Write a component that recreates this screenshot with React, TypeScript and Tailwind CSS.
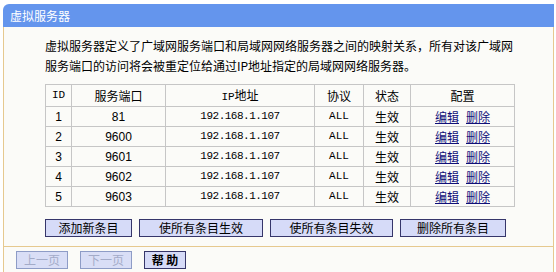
const rows = [
  { id: 1, port: "81" },
  { id: 2, port: "9600" },
  { id: 3, port: "9601" },
  { id: 4, port: "9602" },
  { id: 5, port: "9603" },
];

const cjk = "font-['Noto_Sans_CJK_SC',sans-serif]";
const mono = "font-['Liberation_Mono','Noto_Sans_CJK_SC',monospace]";
const cell = "border border-[#c6c6c6] p-0 text-center align-middle";

function ActionButton({ label, width }: { label: string; width: string }) {
  return (
    <button
      type="button"
      className={`${width} h-[18px] border border-[#36366a] bg-[#d6dbf8] text-[12px] leading-none text-black`}
    >
      {label}
    </button>
  );
}

function PageButton({ label, disabled, width }: { label: string; disabled?: boolean; width: string }) {
  return (
    <button
      type="button"
      disabled={disabled}
      className={
        disabled
          ? `${width} h-[18px] border border-[#8e9cc6] bg-[#d9def6] text-[12px] leading-none text-[#a3abc8]`
          : `${width} h-[18px] border border-[#36366a] bg-[#d6dbf8] text-[12px] font-bold leading-none text-black`
      }
    >
      {label}
    </button>
  );
}

export default function App() {
  return (
    <div className={`h-[272px] w-[556px] bg-white ${cjk}`}>
      <div className="ml-[3px] pt-[4px] w-[551px]">
        <div className="flex h-[23px] items-center rounded-tl-[6px] bg-[#6495ed] pl-[7px] text-[12px] text-white">
          虚拟服务器
        </div>
        <div className="border-x border-[#e6c98f] bg-[#fbfbf8]">
          <div className="pl-[41px] pt-[9px] text-[12px] leading-[20px] text-black">
            <p>虚拟服务器定义了广域网服务端口和局域网网络服务器之间的映射关系，所有对该广域网</p>
            <p>服务端口的访问将会被重定位给通过IP地址指定的局域网网络服务器。</p>
          </div>
          <table className="ml-[41px] mt-[8px] w-[469px] table-fixed border-collapse text-[12px] text-black">
            <colgroup>
              <col className="w-[26px]" />
              <col className="w-[94px]" />
              <col className="w-[149px]" />
              <col className="w-[49px]" />
              <col className="w-[47px]" />
              <col className="w-[104px]" />
            </colgroup>
            <thead>
              <tr className="h-[22px]">
                <th className={`${cell} font-normal ${mono} text-[11px]`}>ID</th>
                <th className={`${cell} font-normal`}>服务端口</th>
                <th className={`${cell} font-normal`}>
                  <span className={`${mono} text-[11px]`}>IP</span>地址
                </th>
                <th className={`${cell} font-normal`}>协议</th>
                <th className={`${cell} font-normal`}>状态</th>
                <th className={`${cell} font-normal`}>配置</th>
              </tr>
            </thead>
            <tbody>
              {rows.map((r) => (
                <tr key={r.id} className="h-[20px]">
                  <td className={`${cell} font-['Liberation_Sans',sans-serif]`}>{r.id}</td>
                  <td className={`${cell} font-['Liberation_Sans',sans-serif]`}>{r.port}</td>
                  <td className={`${cell} ${mono} text-[11px] tracking-[-0.5px]`}>192.168.1.107</td>
                  <td className={`${cell} ${mono} text-[11px]`}>ALL</td>
                  <td className={cell}>生效</td>
                  <td className={cell}>
                    <a href="#" className="text-[#101078] underline">编辑</a>
                    <span className="inline-block w-[7px]" />
                    <a href="#" className="text-[#101078] underline">删除</a>
                  </td>
                </tr>
              ))}
            </tbody>
          </table>
          <div className="ml-[41px] mt-[12px] flex gap-[7px] pb-[9px]">
            <ActionButton label="添加新条目" width="w-[87px]" />
            <ActionButton label="使所有条目生效" width="w-[124px]" />
            <ActionButton label="使所有条目失效" width="w-[123px]" />
            <ActionButton label="删除所有条目" width="w-[106px]" />
          </div>
          <div className="flex gap-[12px] border-y border-[#e6c98f] pb-[3px] pl-[12px] pt-[4px]">
            <PageButton label="上一页" disabled width="w-[52px]" />
            <PageButton label="下一页" disabled width="w-[52px]" />
            <PageButton label="帮 助" width="w-[42px]" />
          </div>
        </div>
      </div>
    </div>
  );
}
